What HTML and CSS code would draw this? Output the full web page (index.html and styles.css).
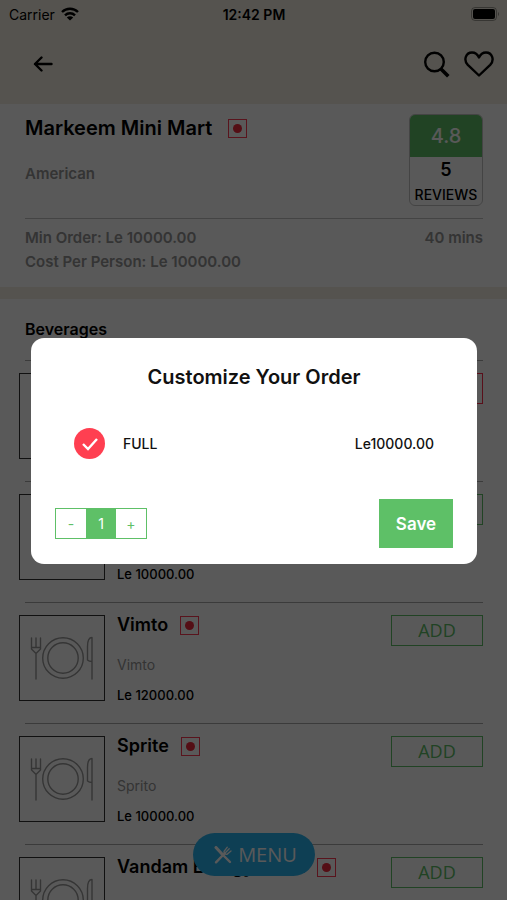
FILE: index.html
```html
<!DOCTYPE html>
<html lang="en">
<head>
<meta charset="utf-8">
<meta name="viewport" content="width=device-width, initial-scale=1">
<title>Markeem Mini Mart</title>
<link rel="stylesheet" href="styles.css">
</head>
<body>
<svg class="defs" aria-hidden="true">
  <symbol id="plate" viewBox="0 0 84 84">
    <g fill="none" stroke="currentColor" stroke-width="1.4" stroke-linecap="round" stroke-linejoin="round">
      <circle cx="43" cy="42" r="20.3"/>
      <circle cx="43" cy="42" r="15.2"/>
      <path d="M11.500 22v11l4.500 4.500 4.500-4.500V22M16 22v9M11.500 31.500h9M16 37.500V63"/>
      <path d="M72 63V21.500c-3 0-4.500 4-4.500 9V44c1.500 1.500 3 1.500 4.500 1.500"/>
    </g>
  </symbol>
</svg>
<div class="app">
  <header class="top">
    <div class="status">
      <span class="carrier">Carrier
        <svg width="18" height="14" viewBox="0 0 18 14" aria-hidden="true"><g fill="none" stroke="#000" stroke-width="2.4"><path d="M1 5c4.500-4.400 11.500-4.400 16 0M4 8.300c2.800-2.800 7.200-2.800 10 0"/></g><path d="M9 13.500 5.800 10.400c1.800-1.600 4.600-1.600 6.400 0z"/></svg>
      </span>
      <span class="clock">12:42 PM</span>
      <svg class="battery" width="28" height="14" viewBox="0 0 28 14" aria-hidden="true"><rect x=".5" y=".5" width="25" height="13" rx="3.500" fill="none" stroke="#000" stroke-opacity=".35"/><rect x="2" y="2" width="22" height="10" rx="2"/><path d="M27 5v4c1.300-.8 1.300-3.200 0-4" fill-opacity=".4"/></svg>
    </div>
    <nav class="bar">
      <button class="icon" aria-label="Back"><svg width="20" height="16" viewBox="0 0 20 16"><path d="M18.500 8H2M8.500 1.500 2 8l6.500 6.500" fill="none" stroke="#000" stroke-width="2.400" stroke-linecap="round" stroke-linejoin="round"/></svg></button>
      <span class="actions">
        <button class="icon" aria-label="Search"><svg width="26" height="27" viewBox="0 0 26 27"><circle cx="10.500" cy="11" r="9.300" fill="none" stroke="#000" stroke-width="2.400"/><path d="m17 18 7.300 7.300" stroke="#000" stroke-width="3.600"/></svg></button>
        <button class="icon" aria-label="Favourite"><svg width="30" height="26" viewBox="0 0 30 26"><path d="M15 24.500 3.800 13.800C-.8 9 1.800 1.500 8 1.500c3.400 0 5.600 1.900 7 5 1.400-3.100 3.600-5 7-5 6.200 0 8.800 7.500 4.200 12.300z" fill="none" stroke="#000" stroke-width="2.400" stroke-linejoin="round"/></svg></button>
      </span>
    </nav>
  </header>

  <section class="store">
    <div class="summary">
      <div>
        <h1>Markeem Mini Mart <i class="mark"></i></h1>
        <p class="cuisine">American</p>
      </div>
      <div class="rating"><b class="score">4.8</b><b class="count">5</b><span class="caption">REVIEWS</span></div>
    </div>
    <div class="facts">
      <div><p>Min Order: Le 10000.00</p><p>Cost Per Person: Le 10000.00</p></div>
      <p>40 mins</p>
    </div>
  </section>

  <main>
    <h2>Beverages</h2>
    <ul>
      <li>
        <div class="thumb"></div>
        <div class="info"></div>
        <button class="add chosen"></button>
      </li>
      <li>
        <div class="thumb"></div>
        <div class="info"><p class="price">Le 10000.00</p></div>
        <button class="add"></button>
      </li>
      <li>
        <div class="thumb"><svg><use href="#plate"/></svg></div>
        <div class="info"><h3>Vimto <i class="mark"></i></h3><p class="desc">Vimto</p><p class="price">Le 12000.00</p></div>
        <button class="add">ADD</button>
      </li>
      <li>
        <div class="thumb"><svg><use href="#plate"/></svg></div>
        <div class="info"><h3>Sprite <i class="mark"></i></h3><p class="desc">Sprito</p><p class="price">Le 10000.00</p></div>
        <button class="add">ADD</button>
      </li>
      <li>
        <div class="thumb"><svg><use href="#plate"/></svg></div>
        <div class="info"><h3>Vandam Energy Drink <i class="mark"></i></h3></div>
        <button class="add">ADD</button>
      </li>
    </ul>
  </main>
  <button class="menu"><svg width="18" height="18" viewBox="0 0 18 18" aria-hidden="true"><g fill="none" stroke="currentColor" stroke-linecap="round"><path d="M2 1.500 8 8" stroke-width="3"/><path d="m8 8 8 8" stroke-width="2.400"/><path d="M2 16.300 11 7" stroke-width="2.400"/><path d="M10 5.500c0 2 1 3 3 2.800L17 5M10 5.500 13.300 1.200M11.800 6.300l3.400-3.500" stroke-width="1.300"/></g></svg>MENU</button>
</div>

<div class="overlay">
  <form class="dialog" role="dialog" aria-labelledby="dialog-title">
    <h2 id="dialog-title">Customize Your Order</h2>
    <label class="option">
      <span class="tick"><input type="checkbox" checked><svg width="18" height="14" viewBox="0 0 18 14" aria-hidden="true"><path d="m2 7 5 5 9-10" fill="none" stroke="#fff" stroke-width="2.400"/></svg></span>
      <span>FULL</span>
      <span class="cost">Le10000.00</span>
    </label>
    <div class="foot">
      <div class="stepper"><button type="button">-</button><output>1</output><button type="button">+</button></div>
      <button type="button" class="save">Save</button>
    </div>
  </form>
</div>
</body>
</html>
```
FILE: styles.css
```css
* { box-sizing: border-box; }
body, h1, h2, h3, p, ul { margin: 0; padding: 0; }
body {
  font-family: Inter, "Open Sans", sans-serif;
  font-size: 14px;
  color: #000;
  background: #fff;
}
button { font: inherit; color: inherit; background: none; border: 0; padding: 0; }
svg { display: block; }
.defs { position: absolute; width: 0; height: 0; }
.app { height: 100vh; overflow: hidden; }

.top { background: #f3eee2; height: 104px; }
.status {
  display: grid;
  grid-template-columns: 1fr auto 1fr;
  align-items: center;
  height: 28px;
  padding: 0 8px 0 9px;
}
.carrier { display: flex; align-items: center; gap: 6px; }
.clock { font-weight: 600; }
.battery { justify-self: end; }
.bar { display: flex; justify-content: space-between; align-items: center; height: 72px; padding: 0 13px 0 33px; }
.actions { display: flex; align-items: center; gap: 14px; }

.store { padding: 10px 24px 0 25px; height: 183px; }
.summary { display: flex; justify-content: space-between; height: 105px; border-bottom: 1px solid #c4c4c4; }
h1 { display: flex; align-items: center; gap: 16px; font-size: 20px; line-height: 28px; font-weight: 600; }
.mark {
  display: grid;
  place-items: center;
  width: 19px;
  height: 19px;
  border: 1px solid #ff3b55;
}
.mark::after { content: ""; width: 9px; height: 9px; border-radius: 50%; background: #f0283c; }
.cuisine { margin-top: 20px; line-height: 24px; font-size: 15px; font-weight: 600; color: #949494; }
.rating {
  display: flex;
  flex-direction: column;
  width: 74px;
  height: 92px;
  border: 1px solid #c4c4c4;
  border-radius: 6px;
  text-align: center;
  overflow: hidden;
}
.score { background: #5ec067; color: #fff; font-size: 20px; font-weight: 500; line-height: 42px; }
.count { font-size: 18px; font-weight: 600; line-height: 26px; }
.caption { font-size: 14px; line-height: 23px; font-weight: 500; }
.facts { display: flex; justify-content: space-between; padding-top: 7px; font-size: 15px; line-height: 24px; font-weight: 600; color: #949494; }

main { border-top: 12px solid #f3eee2; }
main h2 { padding: 18px 25px; font-size: 16px; line-height: 25px; font-weight: 600; }
ul { list-style: none; }
li { display: flex; gap: 12px; height: 121px; padding: 0 24px 0 19px; flex-wrap: wrap; align-content: flex-start; }
li::before { content: ""; flex: 0 0 calc(100% - 6px); margin-left: 6px; height: 1px; background: #aaa; }
.thumb { width: 86px; height: 86px; border: 1px solid #333; color: #999; }
.thumb svg { width: 84px; height: 84px; }
.info { flex: 1; display: flex; flex-direction: column; height: 90px; }
h3 { display: flex; align-items: center; gap: 12px; font-size: 18px; line-height: 20px; font-weight: 600; white-space: nowrap; }
.desc { margin-top: 20px; line-height: 20px; font-size: 14px; font-weight: 400; color: #949494; }
.price { margin-top: auto; line-height: 20px; font-size: 13px; font-weight: 500; }
.add { width: 92px; height: 31px; padding-bottom: 2px; border: 1px solid #5ec067; color: #5ec067; font-family: "Open Sans", sans-serif; font-size: 18px; }
.chosen { border-color: #ff2d4a; }

.menu {
  position: fixed;
  left: 50%;
  bottom: 24px;
  transform: translateX(-50%);
  display: flex;
  align-items: center;
  justify-content: center;
  gap: 6px;
  width: 122px;
  height: 43px;
  padding-left: 4px;
  border-radius: 22px;
  background: #2ab4f0;
  color: #fff;
  font-family: "Open Sans", sans-serif;
  font-size: 20px;
}

.overlay {
  position: fixed;
  inset: 0;
  display: flex;
  align-items: center;
  padding: 2px 30px 0 31px;
  background: rgba(0, 0, 0, .65);
}
.dialog { flex: 1; padding: 24px 24px 16px; border-radius: 13px; background: #fff; color: #111; }
.dialog h2 { font-size: 20px; line-height: 30px; font-weight: 600; text-align: center; }
.option { display: flex; align-items: center; height: 31px; margin: 36px 19px 40px; font-weight: 500; }
.tick { display: grid; place-items: center; margin-right: 18px; }
.tick > * { grid-area: 1 / 1; }
.tick input { appearance: none; width: 31px; height: 31px; margin: 0; border-radius: 50%; background: #ff3f51; }
.tick svg { z-index: 1; pointer-events: none; }
.cost { margin-left: auto; }
.foot { display: flex; justify-content: space-between; align-items: center; }
.stepper { display: flex; width: 92px; height: 31px; border: 1px solid #5ec067; color: #5ec067; }
.stepper > * { flex: 1; text-align: center; line-height: 29px; }
.stepper output { background: #5ec067; color: #fff; }
.save { width: 74px; height: 49px; background: #5ec067; color: #fff; font-size: 17px; font-weight: 600; }
```
